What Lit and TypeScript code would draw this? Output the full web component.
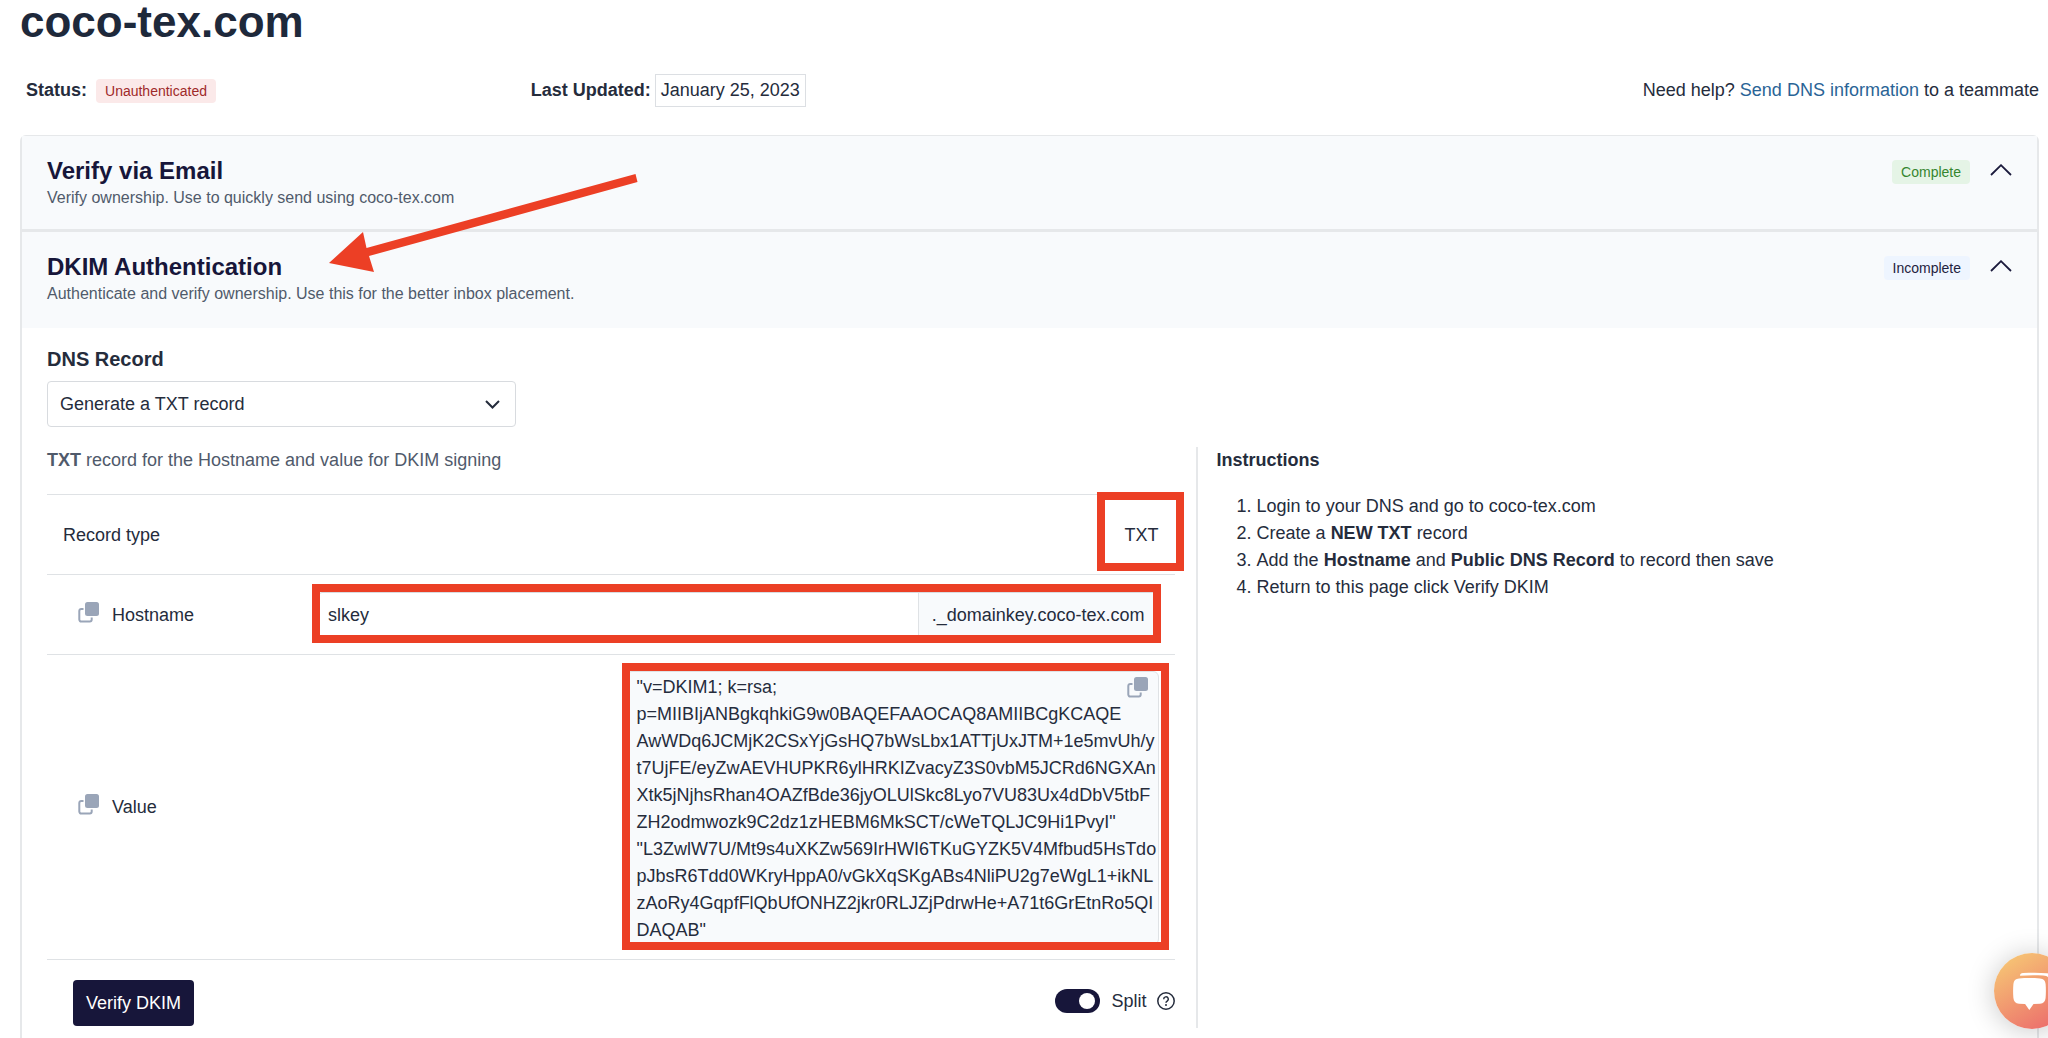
import { LitElement, html, css, svg } from "lit";
import { customElement, state } from "lit/decorators.js";

const DOMAIN = "coco-tex.com";

const DKIM_VALUE = [
  `"v=DKIM1; k=rsa;`,
  `p=MIIBIjANBgkqhkiG9w0BAQEFAAOCAQ8AMIIBCgKCAQE`,
  `AwWDq6JCMjK2CSxYjGsHQ7bWsLbx1ATTjUxJTM+1e5mvUh/y`,
  `t7UjFE/eyZwAEVHUPKR6ylHRKIZvacyZ3S0vbM5JCRd6NGXAn`,
  `Xtk5jNjhsRhan4OAZfBde36jyOLUlSkc8Lyo7VU83Ux4dDbV5tbF`,
  `ZH2odmwozk9C2dz1zHEBM6MkSCT/cWeTQLJC9Hi1PvyI"`,
  `"L3ZwlW7U/Mt9s4uXKZw569IrHWI6TKuGYZK5V4Mfbud5HsTdo`,
  `pJbsR6Tdd0WKryHppA0/vGkXqSKgABs4NliPU2g7eWgL1+ikNL`,
  `zAoRy4GqpfFlQbUfONHZ2jkr0RLJZjPdrwHe+A71t6GrEtnRo5QI`,
  `DAQAB"`,
];

const copyIcon = html`<svg class="icon" width="21" height="21" viewBox="0 0 21 21" aria-hidden="true">
  ${svg`<path d="M5.5 7H3.2A1.9 1.9 0 0 0 1.3 8.9v8.700a1.900 1.900 0 0 0 1.900 1.900h8.600a1.900 1.900 0 0 0 1.900-1.900V15.500" fill="none" stroke="#9aa5b8" stroke-width="2"/>
  <rect x="7" y="0" width="14" height="14" rx="2.500" fill="#9aa5b8"/>`}
</svg>`;

const chevronUp = html`<svg width="22" height="12" viewBox="0 0 22 12" aria-hidden="true">
  ${svg`<path d="M1 11 11 1.200 21 11" fill="none" stroke="#1b1a3c" stroke-width="1.800"/>`}
</svg>`;

@customElement("app-root")
export class AppRoot extends LitElement {
  @state() private split = true;

  static styles = css`
    :host {
      display: flex;
      flex-direction: column;
      box-sizing: border-box;
      min-height: 100vh;
      padding: 0 9px 0 20px;
      overflow: hidden;
      background: #fff;
      color: #252c3c;
      font: 18px/26px "Liberation Sans", Arial, sans-serif;
    }
    *, *::before, *::after { box-sizing: border-box; }
    h1, h2, h3, p, ol { margin: 0; }
    button, input, select { font: inherit; color: inherit; margin: 0; }
    button { border: 0; background: none; padding: 0; cursor: pointer; }
    svg { display: block; }

    .domain {
      font-size: 44px;
      line-height: 44px;
      color: #1e293b;
    }
    .meta {
      display: grid;
      grid-template-columns: 1fr 1fr 2fr;
      align-items: baseline;
      margin: 30px 0 28px;
    }
    .meta-item { display: flex; align-items: baseline; padding-left: 6px; }
    .meta-item.help { display: block; text-align: right; padding: 0; }
    .date {
      margin-left: 4px;
      padding: 3px 5px;
      border: 1px solid #dcdfe3;
      line-height: 25px;
    }
    a { color: #2a6496; text-decoration: none; }

    .badge {
      padding: 0 9px;
      border-radius: 4px;
      font-size: 14px;
      line-height: 24px;
    }
    .badge.error { margin-left: 9px; background: #fbe9e9; color: #9f2a2a; }
    .badge.ok { background: #e5f4e6; color: #35862f; }
    .badge.pending { background: #eef5ff; color: #1f2340; }

    .card {
      flex: 1;
      border: 1px solid #e6e8ea;
      border-width: 1px 2px 0;
      border-radius: 6px 6px 0 0;
    }
    .panel-head {
      display: flex;
      justify-content: space-between;
      align-items: flex-start;
      padding: 21px 25px 20px;
      background: #f8fafc;
      border-bottom: 3px solid #e6e8ea;
    }
    .panel-head.open { border-color: #f8fafc; }
    .panel-title { font-size: 24px; line-height: 28px; color: #17163a; }
    .panel-sub { margin-top: 2px; font-size: 16px; line-height: 22px; color: #505a6b; }
    .panel-side { display: flex; align-items: center; gap: 20px; padding-top: 3px; }
    .panel-side button { padding-bottom: 4px; }

    .panel-body { padding: 19px 21px 0 25px; }
    .field-label { display: block; font-weight: bold; font-size: 20px; line-height: 24px; }
    .select-wrap {
      display: grid;
      width: 469px;
      max-width: 100%;
      margin: 10px 0 20px;
      align-items: center;
    }
    .select-wrap > * { grid-area: 1 / 1; }
    .select-wrap svg { justify-self: end; margin-right: 16px; pointer-events: none; }
    select {
      appearance: none;
      height: 46px;
      padding: 0 40px 0 12px;
      border: 1px solid #d8dbdf;
      border-radius: 4px;
      background: #fff;
    }
    .columns { display: grid; grid-template-columns: 7fr 5fr; }
    .record { padding: 0 21px 2px 0; min-width: 0; }
    .intro { color: #505a6b; }
    .records {
      width: 100%;
      margin-top: 21px;
      border-collapse: separate;
      border-spacing: 0;
      border-bottom: 1px solid #dfe2e5;
    }
    .records th, .records td {
      height: 80px;
      padding: 0 16px;
      border-top: 1px solid #dfe2e5;
      text-align: left;
      font-weight: normal;
    }
    .records th { width: 271px; }
    .records td { padding-left: 0; }
    .records td.end { text-align: right; }
    .records td.tall { padding-block: 16px 14px; }
    .copy-label { display: flex; align-items: center; gap: 13px; padding-left: 15px; }
    .copy-label button { padding-bottom: 5px; }

    .marked { position: relative; }
    .marked::after {
      content: "";
      position: absolute;
      border: 8px solid #ec3f25;
      pointer-events: none;
    }
    .marked.type::after { inset: -33px -25px -26px -28px; }
    .marked.host::after { inset: -9px -3px -6px -7px; }
    .marked.value::after { inset: -9px -11px -6px -5px; }

    .host {
      display: flex;
      height: 46px;
      border: 1px solid #d8dbdf;
      border-radius: 4px;
    }
    .host input {
      flex: 1;
      min-width: 0;
      padding: 0 9px;
      border: 0;
      background: none;
      outline: none;
    }
    .suffix {
      padding: 0 13px;
      border-left: 1px solid #dfe2e5;
      background: #f8fafc;
      line-height: 44px;
    }
    .value {
      width: 533px;
      margin-left: auto;
      padding: 2px 10px 0;
      border: 1px solid #dfe2e5;
      border-radius: 6px;
      background: #f8fafc;
      line-height: 27px;
      white-space: pre;
    }
    .value button { position: absolute; top: 5px; right: 10px; }

    .actions {
      display: flex;
      justify-content: space-between;
      align-items: center;
      margin-top: 20px;
      padding-left: 26px;
    }
    .verify {
      height: 46px;
      padding: 0 13px;
      border-radius: 4px;
      background: #17163a;
      color: #fff;
    }
    .split { display: flex; align-items: center; padding-bottom: 4px; }
    .split label { margin: 0 10px 0 12px; }
    .toggle {
      appearance: none;
      display: flex;
      align-items: center;
      width: 45px;
      height: 24px;
      padding: 0 5px;
      border-radius: 12px;
      background: #9aa5b8;
    }
    .toggle::before {
      content: "";
      width: 16px;
      height: 16px;
      border-radius: 50%;
      background: #fff;
    }
    .toggle:checked { justify-content: flex-end; background: #17163a; }

    .instructions { border-left: 2px solid #e6e8ea; padding-left: 19px; }
    .instructions h3 { font-size: 18px; line-height: 26px; }
    .instructions ol { margin-top: 20px; padding-left: 40px; line-height: 27px; }

    .arrow { position: absolute; left: 329px; top: 174px; pointer-events: none; }
    .chat {
      position: fixed;
      right: -22px;
      bottom: 9px;
      border-radius: 50%;
      box-shadow: 0 2px 28px rgba(0, 0, 0, 0.22);
    }
  `;

  private panelSide(kind: string, text: string) {
    return html`<div class="panel-side">
      <span class="badge ${kind}">${text}</span>
      <button type="button" aria-label="Collapse">${chevronUp}</button>
    </div>`;
  }

  render() {
    return html`
      <h1 class="domain">${DOMAIN}</h1>
      <div class="meta">
        <div class="meta-item"><strong>Status:</strong><span class="badge error">Unauthenticated</span></div>
        <div class="meta-item"><strong>Last Updated:</strong><span class="date">January 25, 2023</span></div>
        <p class="meta-item help">Need help? <a href="#">Send DNS information</a> to a teammate</p>
      </div>

      <main class="card">
        <header class="panel-head">
          <div>
            <h2 class="panel-title">Verify via Email</h2>
            <p class="panel-sub">Verify ownership. Use to quickly send using ${DOMAIN}</p>
          </div>
          ${this.panelSide("ok", "Complete")}
        </header>
        <header class="panel-head open">
          <div>
            <h2 class="panel-title">DKIM Authentication</h2>
            <p class="panel-sub">Authenticate and verify ownership. Use this for the better inbox placement.</p>
          </div>
          ${this.panelSide("pending", "Incomplete")}
        </header>

        <div class="panel-body">
          <label class="field-label" for="record">DNS Record</label>
          <div class="select-wrap">
            <select id="record"><option>Generate a TXT record</option></select>
            <svg width="15" height="9" viewBox="0 0 15 9" aria-hidden="true">
              <path d="M1 1 7.500 7.500 14 1" fill="none" stroke="#252c3c" stroke-width="2" />
            </svg>
          </div>

          <div class="columns">
            <section class="record">
              <p class="intro"><strong>TXT</strong> record for the Hostname and value for DKIM signing</p>
              <table class="records">
                <tr>
                  <th scope="row">Record type</th>
                  <td class="end"><span class="marked type">TXT</span></td>
                </tr>
                <tr>
                  <th scope="row">
                    <div class="copy-label">
                      <button type="button" aria-label="Copy hostname">${copyIcon}</button>
                      <label for="hostname">Hostname</label>
                    </div>
                  </th>
                  <td>
                    <div class="host marked">
                      <input id="hostname" type="text" value="slkey" />
                      <span class="suffix">._domainkey.${DOMAIN}</span>
                    </div>
                  </td>
                </tr>
                <tr>
                  <th scope="row">
                    <div class="copy-label">
                      <button type="button" aria-label="Copy value">${copyIcon}</button>
                      <span>Value</span>
                    </div>
                  </th>
                  <td class="tall">
                    <div class="value marked">${DKIM_VALUE.join("\n")}<button type="button" aria-label="Copy value">${copyIcon}</button></div>
                  </td>
                </tr>
              </table>
              <div class="actions">
                <button class="verify" type="button">Verify DKIM</button>
                <div class="split">
                  <input
                    id="split"
                    class="toggle"
                    type="checkbox"
                    .checked=${this.split}
                    @change=${(e: Event) => (this.split = (e.target as HTMLInputElement).checked)}
                  />
                  <label for="split">Split</label>
                  <svg width="18" height="18" viewBox="0 0 18 18" aria-hidden="true" fill="none" stroke="#252c3c">
                    <circle cx="9" cy="9" r="8.200" stroke-width="1.500" />
                    <path d="M6.700 7.200a2.300 2.300 0 1 1 3.500 1.900c-.8.500-1.200.8-1.200 1.700" stroke-width="1.500" />
                    <circle cx="9" cy="12.900" r="1" fill="#252c3c" stroke="none" />
                  </svg>
                </div>
              </div>
            </section>

            <section class="instructions">
              <h3>Instructions</h3>
              <ol>
                <li>Login to your DNS and go to ${DOMAIN}</li>
                <li>Create a <strong>NEW TXT</strong> record</li>
                <li>Add the <strong>Hostname</strong> and <strong>Public DNS Record</strong> to record then save</li>
                <li>Return to this page click Verify DKIM</li>
              </ol>
            </section>
          </div>
        </div>
      </main>

      <svg class="arrow" width="309" height="100" viewBox="0 0 309 100" aria-hidden="true">
        <path d="M0 89 34 58 37.500 74 306.500 0 308.500 8 40 82 45 98Z" fill="#ec3f25" />
      </svg>

      <button class="chat" type="button" aria-label="Open chat">
        <svg width="76" height="76" viewBox="0 0 76 76" aria-hidden="true">
          <defs>
            <linearGradient id="chat-fill" x1="0.150" y1="0.100" x2="0.700" y2="1">
              <stop offset="0" stop-color="#f6c274" />
              <stop offset="1" stop-color="#ec6f6c" />
            </linearGradient>
          </defs>
          <circle cx="38" cy="38" r="38" fill="url(#chat-fill)" />
          <path d="M26 22.800c0-2 1-2.600 3-2.700 8-.6 16-.6 24 .1 4 .4 6 2.400 6.300 6.300.4 5 .4 10 0 15-.2 2-1 3.300-2.600 3.800V30c-.3-5-2.700-7.200-7.700-7.500-8-.4-15-.4-23 .3Z" fill="#fff" />
          <path d="M25 25.500c7-.6 14-.6 21 0 3.500.3 5.300 2 5.600 5.500.4 5 .4 9 0 14-.3 3.500-2 5.300-5.600 5.700l-6.500.4-4.200 6-4.200-6-6.100-.4c-3.500-.4-5.300-2.200-5.600-5.700-.4-5-.4-9 0-14 .3-3.500 2.100-5.200 5.600-5.500Z" fill="#fff" />
        </svg>
      </button>
    `;
  }
}
